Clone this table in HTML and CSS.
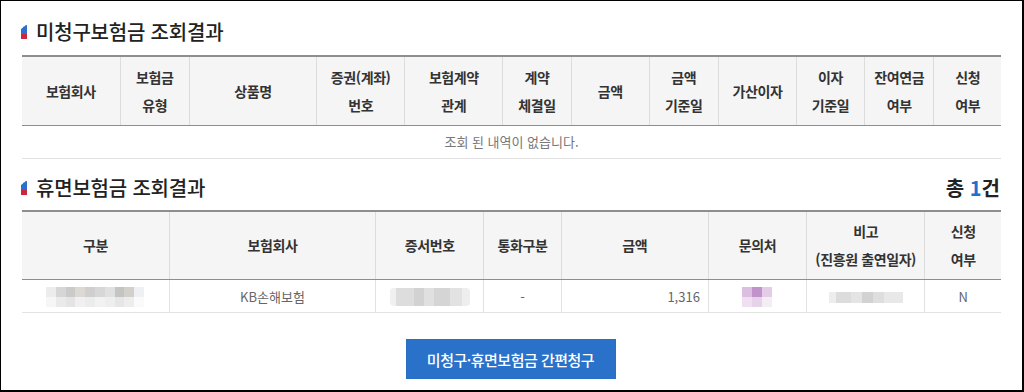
FILE: index.html
```html
<!DOCTYPE html>
<html lang="ko">
<head>
<meta charset="utf-8">
<link rel="stylesheet" href="styles.css">
</head>
<body>
<div class="frame">
  <div class="section-head">
    <h2 class="title"><span class="mark"><svg width="6" height="14" viewBox="0 0 6 14"><polygon points="0,4 2,2.5 2,2 4,1 4,0.5 6,0 6,9 0,9" fill="#2c6fcd"/><polygon points="0,9 6,9 6,14 0,14" fill="#c9283f"/></svg></span>미청구보험금 조회결과</h2>
  </div>
  <table class="grid t1">
    <colgroup>
      <col style="width:98px"><col style="width:69px"><col style="width:127px"><col style="width:88px"><col style="width:98px"><col style="width:68px"><col style="width:78px"><col style="width:69px"><col style="width:78px"><col style="width:68px"><col style="width:69px"><col style="width:67px">
    </colgroup>
    <thead>
      <tr>
        <th>보험회사</th><th>보험금<br>유형</th><th>상품명</th><th>증권(계좌)<br>번호</th><th>보험계약<br>관계</th><th>계약<br>체결일</th><th>금액</th><th>금액<br>기준일</th><th>가산이자</th><th>이자<br>기준일</th><th>잔여연금<br>여부</th><th>신청<br>여부</th>
      </tr>
    </thead>
    <tbody>
      <tr><td class="empty" colspan="12">조회 된 내역이 없습니다.</td></tr>
    </tbody>
  </table>

  <div class="section-head second">
    <h2 class="title"><span class="mark"><svg width="6" height="14" viewBox="0 0 6 14"><polygon points="0,4 2,2.5 2,2 4,1 4,0.5 6,0 6,9 0,9" fill="#2c6fcd"/><polygon points="0,9 6,9 6,14 0,14" fill="#c9283f"/></svg></span>휴면보험금 조회결과</h2>
    <div class="total">총 <em>1</em>건</div>
  </div>
  <table class="grid t2">
    <colgroup>
      <col style="width:147px"><col style="width:206px"><col style="width:108px"><col style="width:77px"><col style="width:147px"><col style="width:98px"><col style="width:118px"><col style="width:76px">
    </colgroup>
    <thead>
      <tr>
        <th>구분</th><th>보험회사</th><th>증서번호</th><th>통화구분</th><th>금액</th><th>문의처</th><th>비고<br>(진흥원 출연일자)</th><th>신청<br>여부</th>
      </tr>
    </thead>
    <tbody>
      <tr>
        <td><span class="blur b-gubun"></span></td>
        <td>KB손해보험</td>
        <td><span class="blur b-cert"></span></td>
        <td>-</td>
        <td class="num">1,316</td>
        <td><span class="blur b-contact"></span></td>
        <td><span class="blur b-note"></span></td>
        <td>N</td>
      </tr>
    </tbody>
  </table>

  <div class="actions">
    <button class="btn" type="button">미청구·휴면보험금 간편청구</button>
  </div>
</div>
</body>
</html>
```

FILE: styles.css
```css
* { box-sizing: border-box; }
html, body { margin: 0; padding: 0; background: #fff; }
body {
  font-family: "Noto Sans CJK KR", "Noto Sans", sans-serif;
  color: #333;
}
.frame {
  width: 1024px;
  height: 392px;
  border-style: solid;
  border-color: #000;
  border-width: 1px 2px 2px 1px;
  padding: 17px 22px 0 20px;
}
.section-head {
  display: flex;
  align-items: center;
  justify-content: space-between;
  height: 28px;
  margin-bottom: 9px;
}
.section-head.second {
  margin-top: 15px;
  margin-bottom: 8px;
}
.title {
  margin: 0;
  display: flex;
  align-items: center;
  font-size: 20px;
  line-height: 28px;
  font-weight: 500;
  color: #222;
  letter-spacing: -0.2px;
}
.mark {
  display: flex;
  width: 6px;
  height: 14px;
  margin-right: 9px;
}
.mark svg { display: block; }
.total {
  font-size: 20px;
  font-weight: 700;
  line-height: 28px;
  color: #222;
}
.total em {
  font-style: normal;
  color: #1e6fd0;
}
.grid {
  width: 979px;
  margin-left: 1px;
  border-collapse: collapse;
  table-layout: fixed;
  border-top: 2px solid #8e8e8e;
}
.grid th {
  background: #f5f5f5;
  font-size: 14px;
  font-weight: 700;
  color: #333;
  line-height: 28px;
  height: 69px;
  padding: 0 2px;
  text-align: center;
  vertical-align: middle;
  border-left: 1px solid #dcdcdc;
  border-bottom: 1px solid #8e8e8e;
  letter-spacing: -0.4px;
}
.grid th:first-child { border-left: none; }
.grid td {
  font-size: 13px;
  color: #666;
  height: 33px;
  padding: 0 8px;
  text-align: center;
  vertical-align: middle;
  border-left: 1px solid #e2e2e2;
  border-bottom: 1px solid #e2e2e2;
}
.grid td:first-child { border-left: none; }
.grid td.empty { color: #777; }
.grid td.num { text-align: right; }
.blur {
  display: inline-block;
  vertical-align: middle;
  filter: blur(0.6px);
}
.b-gubun {
  width: 98px;
  height: 20px;
  background:
    linear-gradient(90deg, #ececec 0 10%, #d6d6d6 10% 20%, #cacaca 20% 30%, #dcd9d5 30% 40%, #cfcfcf 40% 50%, #d7d7d7 50% 60%, #e0e0e0 60% 70%, #c4c4c4 70% 80%, #d3cfcb 80% 90%, #eef0f4 90% 100%) top / 100% 50% no-repeat,
    linear-gradient(90deg, #f6f6f6 0 10%, #eaeaea 10% 20%, #e4e4e4 20% 30%, #f0f0f0 30% 40%, #ececec 40% 50%, #f2f2f2 50% 60%, #eeeeee 60% 70%, #e6e6e6 70% 80%, #ededed 80% 90%, #fafafa 90% 100%) bottom / 100% 50% no-repeat;
}
.b-cert {
  width: 80px;
  height: 18px;
  border-radius: 4px;
  background: linear-gradient(90deg, #f0f0f0 0 8%, #dddddd 8% 30%, #d2d2d2 30% 42%, #e0e0e0 42% 55%, #d5d5d5 55% 75%, #e2e2e2 75% 90%, #eeeeee 90% 100%);
}
.b-contact {
  width: 30px;
  height: 20px;
  background:
    linear-gradient(90deg, #dcbfe0 0 33%, #c293cb 33% 66%, #e3cde6 66% 100%) top / 100% 50% no-repeat,
    linear-gradient(90deg, #efdff1 0 33%, #e6d2e9 33% 66%, #f5edf6 66% 100%) bottom / 100% 50% no-repeat;
}
.b-note {
  width: 74px;
  height: 11px;
  background: linear-gradient(90deg, #ededed 0 10%, #dcdcdc 10% 30%, #e4e4e4 30% 45%, #d2d2d2 45% 60%, #dedede 60% 75%, #e8e8e8 75% 100%);
}
.actions {
  display: flex;
  justify-content: center;
  margin-top: 26px;
}
.btn {
  width: 210px;
  height: 40px;
  border: 1px solid #2a6dc4;
  background: #2a71c9;
  color: #fff;
  font-family: inherit;
  font-size: 15px;
  font-weight: 500;
  letter-spacing: -0.5px;
  padding: 0;
  cursor: pointer;
}
```
